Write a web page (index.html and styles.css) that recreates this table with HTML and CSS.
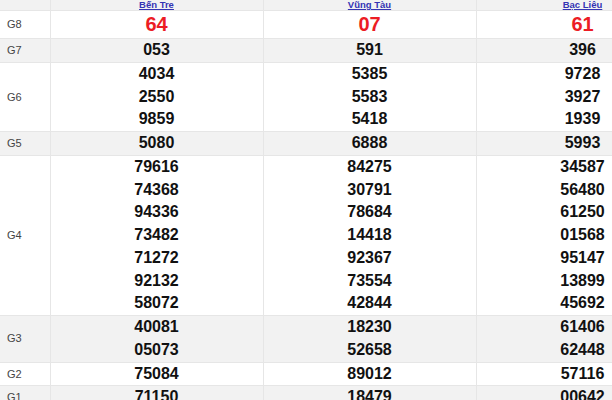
FILE: index.html
```html
<!DOCTYPE html>
<html lang="vi">
<head>
<meta charset="utf-8">
<link rel="stylesheet" href="styles.css">
</head>
<body>
<table class="kq">
  <colgroup>
    <col class="c-label"><col class="c-prov"><col class="c-prov"><col class="c-prov">
  </colgroup>
  <tr class="head">
    <td></td>
    <td><a href="#">Bến Tre</a></td>
    <td><a href="#">Vũng Tàu</a></td>
    <td><a href="#">Bạc Liêu</a></td>
  </tr>
  <tr class="g8">
    <td class="lbl">G8</td>
    <td><div>64</div></td>
    <td><div>07</div></td>
    <td><div>61</div></td>
  </tr>
  <tr class="alt">
    <td class="lbl">G7</td>
    <td><div>053</div></td>
    <td><div>591</div></td>
    <td><div>396</div></td>
  </tr>
  <tr>
    <td class="lbl">G6</td>
    <td><div>4034</div><div>2550</div><div>9859</div></td>
    <td><div>5385</div><div>5583</div><div>5418</div></td>
    <td><div>9728</div><div>3927</div><div>1939</div></td>
  </tr>
  <tr class="alt">
    <td class="lbl">G5</td>
    <td><div>5080</div></td>
    <td><div>6888</div></td>
    <td><div>5993</div></td>
  </tr>
  <tr>
    <td class="lbl">G4</td>
    <td><div>79616</div><div>74368</div><div>94336</div><div>73482</div><div>71272</div><div>92132</div><div>58072</div></td>
    <td><div>84275</div><div>30791</div><div>78684</div><div>14418</div><div>92367</div><div>73554</div><div>42844</div></td>
    <td><div>34587</div><div>56480</div><div>61250</div><div>01568</div><div>95147</div><div>13899</div><div>45692</div></td>
  </tr>
  <tr class="alt">
    <td class="lbl">G3</td>
    <td><div>40081</div><div>05073</div></td>
    <td><div>18230</div><div>52658</div></td>
    <td><div>61406</div><div>62448</div></td>
  </tr>
  <tr>
    <td class="lbl">G2</td>
    <td><div>75084</div></td>
    <td><div>89012</div></td>
    <td><div>57116</div></td>
  </tr>
  <tr class="alt">
    <td class="lbl">G1</td>
    <td><div>71150</div></td>
    <td><div>18479</div></td>
    <td><div>00642</div></td>
  </tr>
</table>
</body>
</html>
```
FILE: styles.css
```css
html, body {
  margin: 0;
  padding: 0;
  overflow: hidden;
  background: #fff;
}
body {
  font-family: "Liberation Sans", Arial, sans-serif;
  color: #111;
}
.kq {
  border-collapse: collapse;
  width: 689px;
  table-layout: fixed;
}
.c-label { width: 50px; }
.c-prov { width: 213px; }
.kq td {
  border: 1px solid #e6e6e6;
  padding: 0;
  text-align: center;
  vertical-align: middle;
  font-size: 16px;
  font-weight: bold;
  line-height: 22.75px;
}
.kq tr:first-child td { border-top: none; }
.kq td:first-child { border-left: none; }
.head td {
  background: #f2f2f2;
  height: 10px;
  line-height: 10px;
  font-size: 9.5px;
}
.head a {
  color: #3434b4;
  text-decoration: underline;
  display: block;
}
.alt td { background: #f2f2f2; }
.kq td.lbl {
  text-align: left;
  padding-left: 7px;
  font-size: 11px;
  font-weight: normal;
  color: #444;
}
.g8 td div {
  color: #ec1c24;
  font-size: 20px;
  line-height: 27px;
}
```
